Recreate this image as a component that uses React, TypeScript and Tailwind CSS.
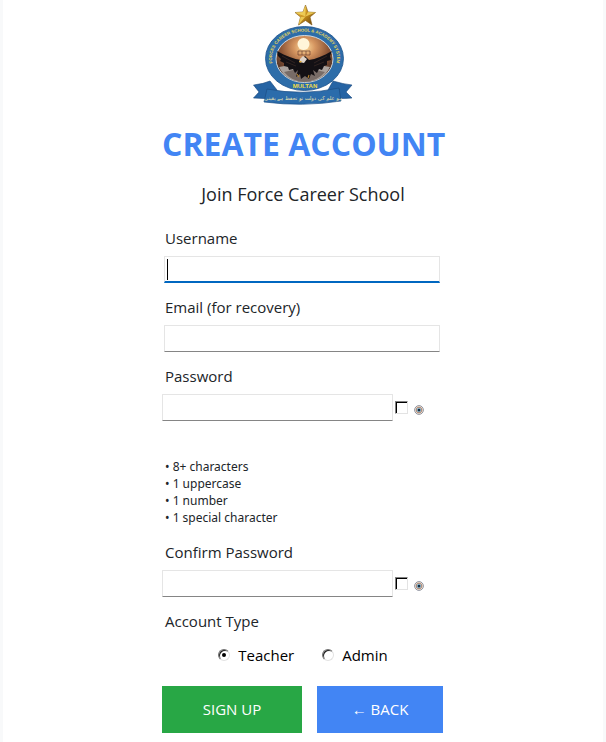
import { useState } from 'react';

function Logo() {
  return (
    <svg viewBox="3 -2 100 110" className="h-[110px] w-[100px]" role="img" aria-label="Forces Career School and Academy System, Multan">
      <defs>
        <path id="ring" d="M23.500 64 A32.500 26.500 0 1 1 85.500 64" />
        <radialGradient id="sky" cx="0.5" cy="0.25" r="0.75">
          <stop offset="0" stopColor="#ffdf9f" />
          <stop offset="0.25" stopColor="#d59560" />
          <stop offset="0.55" stopColor="#8d5637" />
          <stop offset="1" stopColor="#33211d" />
        </radialGradient>
        <linearGradient id="gold" x1="0" y1="0" x2="1" y2="1">
          <stop offset="0" stopColor="#f4d45c" />
          <stop offset="0.5" stopColor="#c98f1c" />
          <stop offset="1" stopColor="#5c3a06" />
        </linearGradient>
      </defs>
      <path d="M3.500 83 Q13 82 20 79 L27 88 L25 96 Q14 97 3.500 96 L9 90 Z" fill="#2664a4" stroke="#17477c" strokeWidth="0.6" />
      <path d="M102 83 Q93 82 83 79 L78 88 L79 96 Q91 97 102 96 L96 90 Z" fill="#2664a4" stroke="#17477c" strokeWidth="0.6" />
      <ellipse cx="54.500" cy="56.500" rx="39" ry="32" fill="#2d6da9" stroke="#1d538d" strokeWidth="0.8" />
      <ellipse cx="54.500" cy="57" rx="28.500" ry="23.500" fill="url(#sky)" stroke="#dfe5ea" strokeWidth="0.9" />
      <path d="M29 65 Q54 59 80 65 Q73 80 54 80 Q36 80 29 65 Z" fill="#aaa29d" />
      <path d="M34 70 Q54 64 75 70 Q68 79 54 80 Q41 79 34 70 Z" fill="#625650" opacity="0.7" />
      <circle cx="53.500" cy="42" r="6" fill="#fff5d9" />
      <path d="M48 49 H60 V53 H48 Z M52 49 V53 M56 49 V53" fill="none" stroke="#6c4130" strokeWidth="0.7" />
      <path d="M51 58 C44 57 36 54 27 49 L28 54 L31 57 L30 59 L34 61 L34 64 L38 65 L39 68 L43 67 L45 71 L48 68 L46 75 L50 72 L51 77 L55 74 L59 77 L61 72 L65 74 L63 68 L67 71 L69 67 L72 68 L74 64 L77 63 L77 59 L81 58 L80 54 L82 49 C73 54 66 57 59 58 L55 54 Z" fill="#131014" />
      <path d="M32 54 L45 61 M36 60 L46 64 M77 54 L64 61 M74 60 L64 64" stroke="#3c2b27" strokeWidth="0.7" />
      <path d="M50 57 L53 54 L57 57 L54 61 L49 60 Z" fill="#ded3c9" />
      <path d="M49 59 L52 59 L50 61 Z" fill="#e0a52b" />
      <path d="M47 72 L49 75 M59 73 L58 76" stroke="#b7832b" strokeWidth="1.100" />
      <path d="M17 87 L28 90 L25 97 Z M90 87 L80 90 L83 97 Z" fill="#174779" />
      <path d="M17 87 Q53 94 89 86 L91 99 Q53 105 14 100 Z" fill="#2b6cab" stroke="#1c4f85" strokeWidth="0.7" />
      <text fill="#e5d45a" fontSize="4.300" fontWeight="700" className="font-['Liberation_Sans',sans-serif]">
        <textPath href="#ring" startOffset="50%" textAnchor="middle">FORCES CAREER SCHOOL &amp; ACADEMY SYSTEM</textPath>
      </text>
      <text x="55" y="85.500" textAnchor="middle" fill="#f1dc49" fontSize="6" fontWeight="700" className="font-['Liberation_Sans',sans-serif]">MULTAN</text>
      <text x="53" y="98" textAnchor="middle" direction="rtl" fill="#e8e1b0" fontSize="5.200" className="font-['DejaVu_Sans',sans-serif]">ہو علم کی دولت تو تحفظ ہے یقینی</text>
      <path d="M55.500 3 L58 10 L65.500 10.500 L60 15 L62 23 L55.500 18.500 L48.500 23 L50.500 15 L45 10.500 L53 10 Z" fill="url(#gold)" stroke="#805610" strokeWidth="0.6" />
      <path d="M55.500 3 V14.500 L45 10.500 L53 10 Z M55.500 14.500 L48.500 23 L50.500 15 Z M55.500 14.500 L58 10 L65.500 10.500 Z" fill="#f7db65" opacity="0.75" />
    </svg>
  );
}

function Eye() {
  return (
    <svg viewBox="0 0 10 10" className="mt-1 ml-1.5 size-2.5" aria-hidden="true">
      <circle cx="5" cy="5" r="4.400" fill="#f3e6cf" stroke="#858a9c" strokeWidth="0.9" />
      <circle cx="5" cy="5" r="2.800" fill="#a9dcec" stroke="#a5695a" strokeWidth="0.8" />
      <circle cx="5" cy="5" r="1.500" fill="#152c43" />
    </svg>
  );
}

const labelClass = 'block pl-[3px] text-[15px] leading-[22px]';
const inputClass = 'block h-[27px] border border-[#e5e5e5] border-b-[#858585] bg-white px-1 text-[15px] outline-none';

function PasswordField({ id, label }: { id: string; label: string }) {
  const [visible, setVisible] = useState(false);
  return (
    <div>
      <label htmlFor={id} className={labelClass}>{label}</label>
      <div className="mt-[7px] flex items-center">
        <input id={id} type={visible ? 'text' : 'password'} className={`${inputClass} w-[231px] rounded-[1px]`} />
        <label className="ml-0.5 flex items-center">
          <input
            type="checkbox"
            aria-label={`Show ${label.toLowerCase()}`}
            checked={visible}
            onChange={(e) => setVisible(e.target.checked)}
            className="size-[13px] appearance-none border border-t-[#808080] border-r-[#e3e3e3] border-b-[#e3e3e3] border-l-[#808080] bg-white shadow-[inset_1px_1px_0_#000] checked:bg-[#333]"
          />
          <Eye />
        </label>
      </div>
    </div>
  );
}

function AccountOption({ label, checked, onSelect }: { label: string; checked: boolean; onSelect: () => void }) {
  return (
    <label className="flex items-center gap-2 text-[15px] leading-[22px] text-black">
      <span className="grid size-3 place-items-center">
        <input
          type="radio"
          name="accountType"
          checked={checked}
          onChange={onSelect}
          className="col-start-1 row-start-1 size-3 appearance-none rounded-full border border-t-[#707070] border-r-[#e3e3e3] border-b-[#e3e3e3] border-l-[#707070] bg-white shadow-[inset_1px_1px_0_#222]"
        />
        {checked && <span className="pointer-events-none col-start-1 row-start-1 size-1 rounded-full bg-black" />}
      </span>
      {label}
    </label>
  );
}

export default function App() {
  const [account, setAccount] = useState('Teacher');
  return (
    <main className="min-h-screen border-x-[3px] border-[#f8f9fa] bg-white font-['Open_Sans','Noto_Sans',sans-serif] text-[#212529]">
      <form className="mx-auto flex w-[282px] flex-col pb-[9px]" onSubmit={(e) => e.preventDefault()}>
        <div className="flex justify-center">
          <Logo />
        </div>
        <h1 className="mt-3 text-center text-[32px] leading-[44px] font-bold whitespace-nowrap text-[#4285f4]">CREATE ACCOUNT</h1>
        <p className="mt-3 text-center text-lg leading-8">Join Force Career School</p>

        <div className="mt-[17px] flex flex-col gap-[13px]">
          <div>
            <label htmlFor="username" className={labelClass}>Username</label>
            <div className="mt-[7px] ml-0.5 flex h-[27px] w-[276px] items-center border border-[#e5e5e5] border-b-2 border-b-[#0067c0] pl-0.5">
              <span className="h-[21px] w-px bg-black" />
              <input id="username" className="w-full min-w-0 bg-transparent text-[15px] caret-transparent outline-none" />
            </div>
          </div>
          <div>
            <label htmlFor="email" className={labelClass}>Email (for recovery)</label>
            <input id="email" type="email" className={`${inputClass} mt-[7px] ml-0.5 w-[276px] rounded-[1px]`} />
          </div>
          <PasswordField id="password" label="Password" />
        </div>

        <ul className="mt-[37px] pl-[3px] font-['Noto_Sans','Open_Sans',sans-serif] text-xs leading-[17px]">
          <li>• 8+ characters</li>
          <li>• 1 uppercase</li>
          <li>• 1 number</li>
          <li>• 1 special character</li>
        </ul>

        <div className="mt-[15px]">
          <PasswordField id="confirm" label="Confirm Password" />
        </div>

        <fieldset className="mt-[13px]">
          <legend className={labelClass}>Account Type</legend>
          <div className="mt-3 flex justify-center gap-7">
            <AccountOption label="Teacher" checked={account === 'Teacher'} onSelect={() => setAccount('Teacher')} />
            <AccountOption label="Admin" checked={account === 'Admin'} onSelect={() => setAccount('Admin')} />
          </div>
        </fieldset>

        <div className="mt-5 flex gap-[15px] text-[15px] text-white">
          <button type="submit" className="h-[47px] w-[140px] bg-[#28a745]">SIGN UP</button>
          <button type="button" className="h-[47px] w-[126px] bg-[#4285f4]">← BACK</button>
        </div>
      </form>
    </main>
  );
}
